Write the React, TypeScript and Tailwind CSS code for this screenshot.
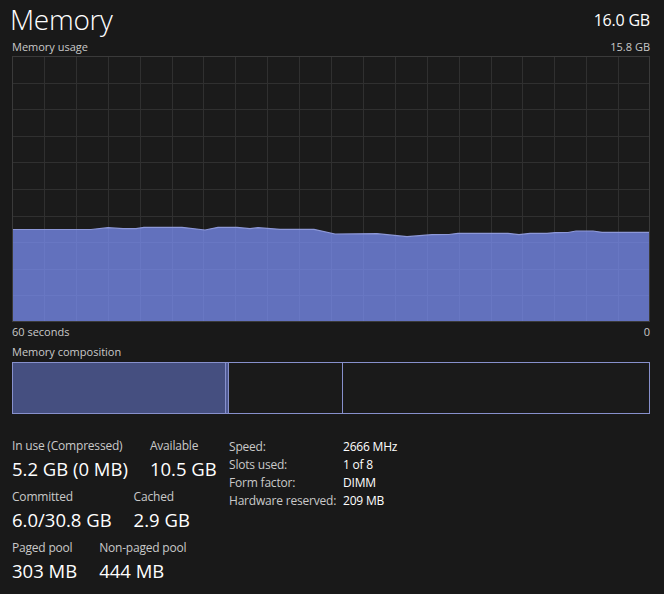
import React from "react";

const W = 638;
const H = 266;
const pts: [number, number][] = [
  [12, 229.5], [91, 229.5], [108, 227.7], [123, 228.7], [136, 228.7], [144, 227.3], [182, 227.3], [205, 230], [218, 227.3], [237, 227.3], [250, 228.7], [258, 227.7], [280, 229.3], [314, 229.3], [335, 234], [377, 233.7], [407, 236.7], [432, 234.7], [449, 234.5], [458, 233.3], [508, 233.3], [519, 234.7], [530, 233.3], [547, 233.3], [555, 232.7], [568, 232.5], [576, 231], [593, 231], [602, 232.3], [650, 232.3],
];

function Chart() {
  const ox = 12;
  const oy = 56;
  const line = pts.map(([x, y]) => `${(x - ox).toFixed(1)},${(y - oy).toFixed(1)}`).join(" L ");
  const area = `M 0,${H} L ${line} L ${W},${H} Z`;
  const vlines = Array.from({ length: 19 }, (_, i) => Math.round(((i + 1) * W) / 20) + 0.5);
  const hlines = Array.from({ length: 9 }, (_, i) => Math.round(((i + 1) * H) / 10) + 0.5);
  return (
    <svg width={W} height={H} viewBox={`0 0 ${W} ${H}`} className="block">
      <defs>
        <clipPath id="fillclip">
          <path d={area} />
        </clipPath>
      </defs>
      <rect x={0} y={0} width={W} height={H} fill="#1b1b1b" />
      {vlines.map((x) => (
        <line key={"v" + x} x1={x} y1={0} x2={x} y2={H} stroke="#303030" strokeWidth={1} />
      ))}
      {hlines.map((y) => (
        <line key={"h" + y} x1={0} y1={y} x2={W} y2={y} stroke="#303030" strokeWidth={1} />
      ))}
      <path d={area} fill="#6271bd" />
      <g clipPath="url(#fillclip)">
        {vlines.map((x) => (
          <line key={"vv" + x} x1={x} y1={0} x2={x} y2={H} stroke="#6877c3" strokeWidth={1} />
        ))}
        {hlines.map((y) => (
          <line key={"hh" + y} x1={0} y1={y} x2={W} y2={y} stroke="#6877c3" strokeWidth={1} />
        ))}
      </g>
      <path d={`M ${line}`} fill="none" stroke="#8d98d8" strokeWidth={1.2} />
      <rect x={0.5} y={0.5} width={W - 1} height={H - 1} fill="none" stroke="#3a3a3a" strokeWidth={1} />
    </svg>
  );
}

function Stat({ label, value }: { label: string; value: string }) {
  return (
    <div className="flex flex-col">
      <div className="text-[12px] leading-[16px] text-[#c9c9c9] tracking-[-0.2px]">{label}</div>
      <div className="text-[18.5px] leading-[26px] text-white mt-[2px]">{value}</div>
    </div>
  );
}

export default function App() {
  return (
    <div
      className="w-[664px] h-[594px] bg-[#191919] text-white pl-[12px] pr-[14px] overflow-hidden"
      style={{ fontFamily: '"Open Sans", "Noto Sans", sans-serif' }}
    >
      <div className="flex items-end justify-between h-[38px]">
        <div className="text-[28px] leading-[38px] font-light -ml-[2px] tracking-[-0.3px]">Memory</div>
        <div className="text-[16px] leading-[20px] mb-[8px] tracking-[-0.2px]">16.0 GB</div>
      </div>
      <div className="flex justify-between text-[11px] leading-[14px] text-[#c9c9c9] mt-[2px] h-[16px]">
        <span>Memory usage</span>
        <span>15.8 GB</span>
      </div>
      <Chart />
      <div className="flex justify-between text-[11px] leading-[14px] text-[#c9c9c9] mt-[3px]">
        <span>60 seconds</span>
        <span>0</span>
      </div>
      <div className="text-[11px] leading-[14px] text-[#c9c9c9] mt-[6px]">Memory composition</div>
      <div className="mt-[3px] h-[52px] flex border border-[#8790cc] bg-[#1a1a1a]">
        <div className="w-[212px] bg-[#454f80]" />
        <div className="w-[4px] bg-[#4f5a93] border-l border-r border-[#8790cc]" />
        <div className="w-[114px] border-r border-[#8790cc]" />
        <div className="flex-1" />
      </div>
      <div className="flex items-start mt-[24px]">
        <div className="flex flex-col gap-[7px] w-[217px] shrink-0">
          <div className="flex gap-[22px]">
            <Stat label="In use (Compressed)" value="5.2 GB (0 MB)" />
            <Stat label="Available" value="10.5 GB" />
          </div>
          <div className="flex gap-[22px]">
            <Stat label="Committed" value="6.0/30.8 GB" />
            <Stat label="Cached" value="2.9 GB" />
          </div>
          <div className="flex gap-[22px]">
            <Stat label="Paged pool" value="303 MB" />
            <Stat label="Non-paged pool" value="444 MB" />
          </div>
        </div>
        <div className="grid grid-cols-[114px_auto] auto-rows-[18px] content-start text-[12px] leading-[18px] text-[#c9c9c9] tracking-[-0.2px]">
          <span>Speed:</span>
          <span className="text-white">2666 MHz</span>
          <span>Slots used:</span>
          <span className="text-white">1 of 8</span>
          <span>Form factor:</span>
          <span className="text-white">DIMM</span>
          <span className="whitespace-nowrap">Hardware reserved:</span>
          <span className="text-white">209 MB</span>
        </div>
      </div>
    </div>
  );
}
